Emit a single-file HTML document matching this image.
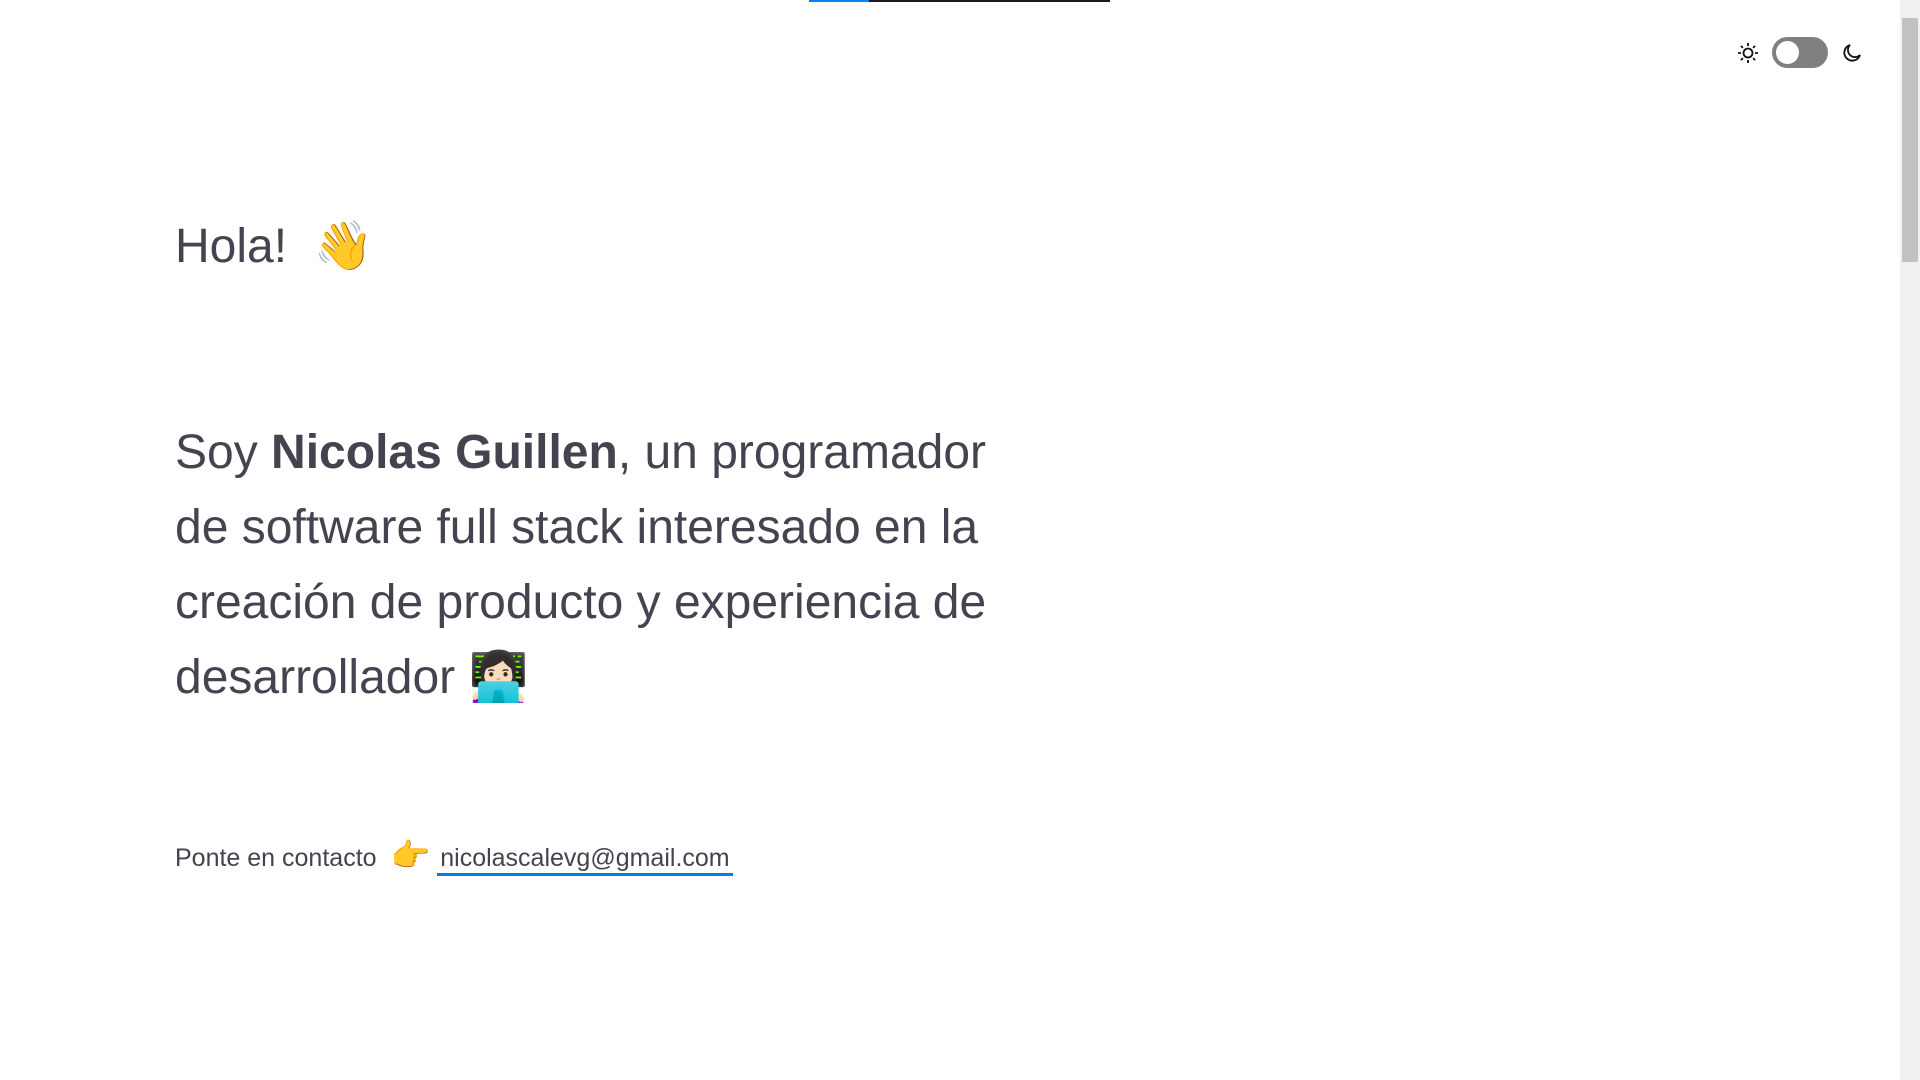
<!DOCTYPE html>
<html><head><meta charset="utf-8"><style>
html,body{margin:0;padding:0;width:1920px;height:1080px;overflow:hidden;background:#fff;font-family:"Liberation Sans","Noto Sans CJK JP",sans-serif;color:#44434f}
.topb{position:absolute;top:0;left:809px;height:2px;width:60px;background:#0a84ec}
.topk{position:absolute;top:0;left:869px;height:2px;width:241px;background:#1a1a1a}
.sb{position:absolute;right:0;top:0;width:20px;height:1080px;background:#f1f1f1}
.thumb{position:absolute;right:2px;top:18px;width:16px;height:244px;background:#c1c1c1}
.tog{position:absolute;left:1772px;top:37px;width:56px;height:31px;border-radius:16px;background:#808080}
.tog::after{content:"";position:absolute;left:4px;top:4px;width:23px;height:23px;border-radius:50%;background:#fff}
h1{position:absolute;left:175px;top:207px;margin:0;font-weight:normal;font-size:48px;line-height:80px}
p.main{position:absolute;left:175px;top:415px;margin:0;width:840px;font-size:48px;line-height:75px}
.c{position:absolute;left:175px;top:835px;font-size:25px;line-height:40px}
.c a{color:#44434f;text-decoration:none;border-bottom:3px solid #0a7ce8;padding:0 3px 1px}
.e{font-size:32px}
</style></head><body>
<div class="topb"></div><div class="topk"></div>
<svg style="position:absolute;left:1737px;top:42px" width="22" height="22" viewBox="0 0 22 22" fill="none" stroke="#111" stroke-width="1.8"><circle cx="11" cy="11" r="4.5"/><path d="M11 1v3M11 18v3M1 11h3M18 11h3M3.9 3.9l2 2M16.1 16.1l2 2M3.9 18.1l2-2M16.1 5.9l2-2"/></svg>
<div class="tog"></div>
<svg style="position:absolute;left:1841px;top:42px" width="22" height="22" viewBox="0 0 22 22" fill="none" stroke="#111" stroke-width="1.8"><path d="M9 3a8 8 0 1 0 10 10A7 7 0 0 1 9 3z"/></svg>
<div class="sb"><div class="thumb"></div></div>
<h1>Hola!&nbsp; 👋</h1>
<p class="main">Soy <b>Nicolas Guillen</b>, un programador de software full stack interesado en la creación de producto y experiencia de desarrollador 👩🏻‍💻</p>
<div class="c">Ponte en contacto &nbsp;<span class="e">👉</span>&nbsp;<a>nicolascalevg@gmail.com</a></div>
</body></html>
